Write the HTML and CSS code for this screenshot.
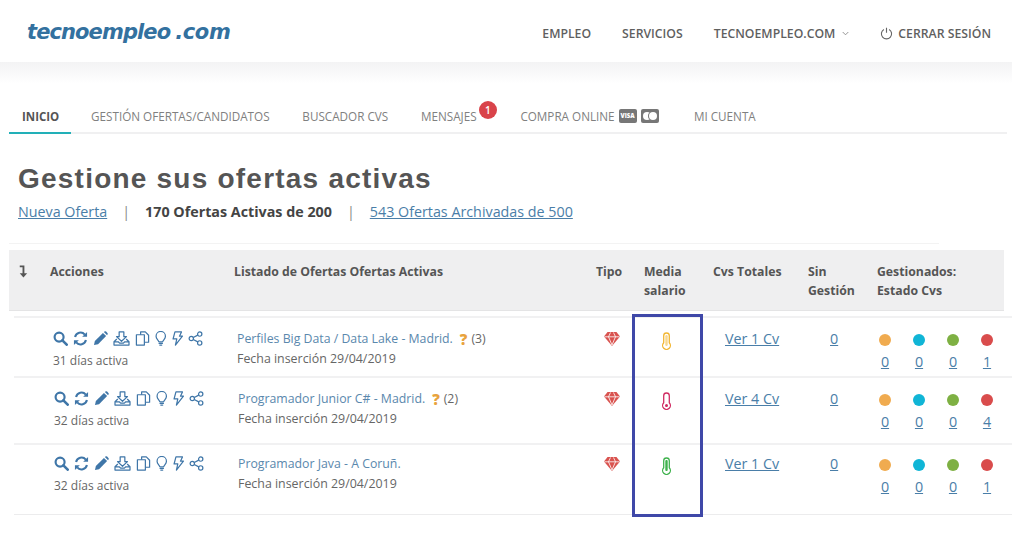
FILE: index.html
```html
<!DOCTYPE html>
<html lang="es">
<head>
<meta charset="utf-8">
<title>Gestione sus ofertas activas</title>
<link rel="stylesheet" href="styles.css">
</head>
<body>
<svg class="sprite" width="0" height="0" aria-hidden="true">
  <symbol id="i-search" viewBox="0 0 16 16"><circle cx="6.500" cy="6.500" r="4.800" fill="none" stroke="currentColor" stroke-width="2.300"/><path d="M10 10l4.600 4.600" stroke="currentColor" stroke-width="2.800" stroke-linecap="round"/></symbol>
  <symbol id="i-refresh" viewBox="0 0 16 16"><path d="M2.200 6.400A6 6 0 0 1 12.600 3.800" fill="none" stroke="currentColor" stroke-width="2.200"/><path d="M15 1v5.200H9.800z" fill="currentColor"/><path d="M13.800 9.600A6 6 0 0 1 3.400 12.200" fill="none" stroke="currentColor" stroke-width="2.200"/><path d="M1 15V9.800h5.200z" fill="currentColor"/></symbol>
  <symbol id="i-pencil" viewBox="0 0 16 16"><path d="M1 15l1-4.400L10.600 2l3.400 3.400L5.400 14z" fill="currentColor"/><path d="M11.600 1l.6-.4a1.400 1.400 0 0 1 1.800 0l1.400 1.400a1.400 1.400 0 0 1 0 1.800l-.4.6z" fill="currentColor"/></symbol>
  <symbol id="i-download" viewBox="0 0 18 16"><path d="M6.500 1h5v5h2.800L9 11 3.700 6h2.800z" fill="none" stroke="currentColor" stroke-width="1.300" stroke-linejoin="round"/><path d="M4 8.500L1 11.500V15h16v-3.500L14 8.500M1 11.500h4.500l1.500 1.500h4l1.500-1.500H17" fill="none" stroke="currentColor" stroke-width="1.300" stroke-linejoin="round"/></symbol>
  <symbol id="i-copy" viewBox="0 0 16 16"><path d="M6 4V1h5l3.500 3.500V12H10" fill="none" stroke="currentColor" stroke-width="1.300" stroke-linejoin="round"/><path d="M1.500 4H10v11H1.500z" fill="none" stroke="currentColor" stroke-width="1.300" stroke-linejoin="round"/></symbol>
  <symbol id="i-bulb" viewBox="0 0 12 16"><path d="M4 11.500C3.500 9.500 1 8.500 1 5.500a5 5 0 0 1 10 0c0 3-2.500 4-3 6z" fill="none" stroke="currentColor" stroke-width="1.300" stroke-linejoin="round"/><path d="M4.300 13.200h3.400M5 15h2" stroke="currentColor" stroke-width="1.400" stroke-linecap="round"/></symbol>
  <symbol id="i-bolt" viewBox="0 0 12 16"><path d="M3 1h7L7.800 5.500H11L3.500 15 5 8.500H1z" fill="none" stroke="currentColor" stroke-width="1.300" stroke-linejoin="round"/></symbol>
  <symbol id="i-share" viewBox="0 0 16 16"><circle cx="12.500" cy="3.300" r="2.300" fill="none" stroke="currentColor" stroke-width="1.300"/><circle cx="3.500" cy="8" r="2.300" fill="none" stroke="currentColor" stroke-width="1.300"/><circle cx="12.500" cy="12.700" r="2.300" fill="none" stroke="currentColor" stroke-width="1.300"/><path d="M5.600 7l4.800-2.600M5.600 9l4.800 2.600" stroke="currentColor" stroke-width="1.300"/></symbol>
  <symbol id="i-gem" viewBox="0 0 16 14"><path d="M3.500 0h9L16 4.500 8 14 0 4.500z" fill="currentColor"/><path d="M.5 4.800h15M4.500 4.800L8 13 11.500 4.800M4.500 4.800L6.500.5M11.500 4.800L9.500.5" fill="none" stroke="#fff" stroke-width=".8"/></symbol>
  <symbol id="i-thermo" viewBox="0 0 10 18"><path d="M2.200 10.800V3.800a2.800 2.800 0 0 1 5.600 0v7a3.900 3.900 0 1 1-5.600 0z" fill="none" stroke="currentColor" stroke-width="1.300"/></symbol>
</svg>

<header class="topbar">
  <a class="logo">tecnoempleo<span class="logo-dot">.com</span></a>
  <nav class="mainnav">
    <a>EMPLEO</a>
    <a>SERVICIOS</a>
    <a class="with-chevron">TECNOEMPLEO.COM
      <svg class="chevron" viewBox="0 0 8 5" width="7" height="5"><path d="M.8.800L4 4l3.200-3.200" fill="none" stroke="#888" stroke-width="1"/></svg>
    </a>
    <a class="logout">
      <svg viewBox="0 0 14 14" width="13" height="13"><path d="M4.200 2.600a5.500 5.500 0 1 0 5.600 0" fill="none" stroke="#666" stroke-width="1.200"/><path d="M7 .8v5.400" stroke="#666" stroke-width="1.200"/></svg>
      CERRAR SESIÓN
    </a>
  </nav>
</header>
<div class="band"></div>

<nav class="tabs">
  <a class="tab active">INICIO</a>
  <a class="tab">GESTIÓN OFERTAS/CANDIDATOS</a>
  <a class="tab">BUSCADOR CVS</a>
  <a class="tab tab-msg">MENSAJES<span class="badge">1</span></a>
  <a class="tab tab-buy">COMPRA ONLINE
    <span class="card card-visa">VISA</span>
    <span class="card card-mc"><i></i><i></i></span>
  </a>
  <a class="tab">MI CUENTA</a>
</nav>

<main class="content">
  <h1 class="title">Gestione sus ofertas activas</h1>
  <p class="summary">
    <a class="link">Nueva Oferta</a><span class="sep">|</span><strong>170 Ofertas Activas de 200</strong><span class="sep">|</span><a class="link">543 Ofertas Archivadas de 500</a>
  </p>
  <div class="rule"></div>

  <section class="table">
    <div class="thead">
      <div class="sort"><svg viewBox="0 0 10 14" width="10" height="13"><path d="M1.500 1.500h4v8.500" fill="none" stroke="#555" stroke-width="2"/><path d="M1.500 9h8L5.500 13.500z" fill="#555"/></svg></div>
      <div>Acciones</div>
      <div>Listado de Ofertas Ofertas Activas</div>
      <div>Tipo</div>
      <div>Media<br>salario</div>
      <div>Cvs Totales</div>
      <div>Sin<br>Gestión</div>
      <div>Gestionados:<br>Estado Cvs</div>
    </div>

    <article class="row row-1">
      <div class="actions">
        <div class="icons">
          <svg class="ic"><use href="#i-search"/></svg><svg class="ic"><use href="#i-refresh"/></svg><svg class="ic"><use href="#i-pencil"/></svg><svg class="ic ic-w"><use href="#i-download"/></svg><svg class="ic"><use href="#i-copy"/></svg><svg class="ic ic-n"><use href="#i-bulb"/></svg><svg class="ic ic-n"><use href="#i-bolt"/></svg><svg class="ic"><use href="#i-share"/></svg>
        </div>
        <div class="muted">31 días activa</div>
      </div>
      <div class="offer">
        <div class="offer-name"><a>Perfiles Big Data / Data Lake - Madrid.</a> <b class="q">?</b><span class="muted">(3)</span></div>
        <div class="muted date">Fecha inserción 29/04/2019</div>
      </div>
      <svg class="gem"><use href="#i-gem"/></svg>
      <svg class="thermo t-yellow" viewBox="0 0 10 18"><use href="#i-thermo"/><rect x="3.800" y="3" width="2.400" height="11" rx="1.200" fill="currentColor" opacity=".55"/></svg>
      <a class="link cv">Ver 1 Cv</a>
      <a class="link sin">0</a>
      <div class="states">
        <div><i class="dot d-o"></i><a class="link">0</a></div><div><i class="dot d-b"></i><a class="link">0</a></div><div><i class="dot d-g"></i><a class="link">0</a></div><div><i class="dot d-r"></i><a class="link">1</a></div>
      </div>
    </article>

    <article class="row row-2">
      <div class="actions">
        <div class="icons">
          <svg class="ic"><use href="#i-search"/></svg><svg class="ic"><use href="#i-refresh"/></svg><svg class="ic"><use href="#i-pencil"/></svg><svg class="ic ic-w"><use href="#i-download"/></svg><svg class="ic"><use href="#i-copy"/></svg><svg class="ic ic-n"><use href="#i-bulb"/></svg><svg class="ic ic-n"><use href="#i-bolt"/></svg><svg class="ic"><use href="#i-share"/></svg>
        </div>
        <div class="muted">32 días activa</div>
      </div>
      <div class="offer">
        <div class="offer-name"><a>Programador Junior C# - Madrid.</a> <b class="q">?</b><span class="muted">(2)</span></div>
        <div class="muted date">Fecha inserción 29/04/2019</div>
      </div>
      <svg class="gem"><use href="#i-gem"/></svg>
      <svg class="thermo t-red" viewBox="0 0 10 18"><use href="#i-thermo"/><circle cx="5" cy="13.500" r="1.500" fill="currentColor"/></svg>
      <a class="link cv">Ver 4 Cv</a>
      <a class="link sin">0</a>
      <div class="states">
        <div><i class="dot d-o"></i><a class="link">0</a></div><div><i class="dot d-b"></i><a class="link">0</a></div><div><i class="dot d-g"></i><a class="link">0</a></div><div><i class="dot d-r"></i><a class="link">4</a></div>
      </div>
    </article>

    <article class="row row-3">
      <div class="actions">
        <div class="icons">
          <svg class="ic"><use href="#i-search"/></svg><svg class="ic"><use href="#i-refresh"/></svg><svg class="ic"><use href="#i-pencil"/></svg><svg class="ic ic-w"><use href="#i-download"/></svg><svg class="ic"><use href="#i-copy"/></svg><svg class="ic ic-n"><use href="#i-bulb"/></svg><svg class="ic ic-n"><use href="#i-bolt"/></svg><svg class="ic"><use href="#i-share"/></svg>
        </div>
        <div class="muted">32 días activa</div>
      </div>
      <div class="offer">
        <div class="offer-name"><a>Programador Java - A Coruñ.</a></div>
        <div class="muted date">Fecha inserción 29/04/2019</div>
      </div>
      <svg class="gem"><use href="#i-gem"/></svg>
      <svg class="thermo t-green" viewBox="0 0 10 18"><use href="#i-thermo"/><rect x="3.800" y="3" width="2.400" height="11" rx="1" fill="currentColor"/></svg>
      <a class="link cv">Ver 1 Cv</a>
      <a class="link sin">0</a>
      <div class="states">
        <div><i class="dot d-o"></i><a class="link">0</a></div><div><i class="dot d-b"></i><a class="link">0</a></div><div><i class="dot d-g"></i><a class="link">0</a></div><div><i class="dot d-r"></i><a class="link">1</a></div>
      </div>
    </article>

    <div class="highlight"></div>
  </section>
</main>
</body>
</html>
```

FILE: styles.css
```css
* { box-sizing: border-box; }
html, body { margin: 0; padding: 0; background: #fff; overflow: hidden; }
body { width: 1024px; height: 539px; font-family: "Open Sans", sans-serif; color: #555; }
.sprite { position: absolute; }

.topbar { height: 62px; display: flex; align-items: center; justify-content: space-between; padding: 2px 33px 0 27px; }
.logo { font-family: "DejaVu Sans", sans-serif; font-weight: 700; font-style: italic; font-size: 21px; letter-spacing: -0.900px; color: #33719f; }
.logo-dot { letter-spacing: -0.400px; margin-left: 5px; }
.mainnav { display: flex; align-items: center; gap: 31px; font-size: 12.250px; font-weight: 600; color: #5f5f5f; padding-top: 3px; }
.with-chevron { display: flex; align-items: center; gap: 7px; }
.chevron { display: block; }
.logout { display: flex; align-items: center; gap: 5px; }

.band { width: 1012px; height: 22px; background: linear-gradient(#f3f3f4, #fff); }

.tabs { width: 998px; margin: 10px 0 0 9px; height: 40px; display: flex; gap: 6.800px; border-bottom: 2px solid #f0f0f1; font-size: 11.700px; color: #808080; }
.tab { height: 40px; padding: 4px 13px 0; display: flex; align-items: center; gap: 4px; position: relative; }
.tab.active { color: #555; font-weight: 700; font-size: 11.500px; padding-top: 6px; padding-right: 12px; border-bottom: 2px solid #22b0b8; }
.tab-msg { padding-right: 37px; }
.tab-buy { padding-left: 0; padding-right: 15.500px; }
.badge { position: absolute; left: 71px; top: 7px; width: 18px; height: 18px; border-radius: 50%; background: #d9434a; color: #fff; font-size: 10px; font-weight: 600; display: flex; align-items: center; justify-content: center; }
.card { width: 18px; height: 14px; border-radius: 2px; background: #777; color: #fff; font-size: 6px; font-weight: 800; display: inline-flex; align-items: center; justify-content: center; }
.card-mc i { width: 8px; height: 8px; border-radius: 50%; background: #fff; display: block; }
.card-mc i + i { margin-left: -2px; box-shadow: -1px 0 0 #777; }

.content { padding-left: 9px; }
.title { margin: 27px 0 0 9px; font-family: "Liberation Sans", sans-serif; font-weight: 700; font-size: 28px; line-height: 36px; letter-spacing: 1.220px; color: #555; }
.summary { margin: 4px 0 0 9px; font-size: 14.300px; line-height: 22px; color: #444; display: flex; }
.summary strong { font-weight: 700; font-size: 14.300px; }
.sep { color: #888; margin: 0 15px; }
.link { color: #4a7ea8; text-decoration: underline; }
.rule { width: 930px; height: 1px; margin-top: 20px; background: #f3f3f3; }

.table { position: relative; margin-top: 6px; font-size: 12px; }
.thead { width: 995px; height: 61px; background: #efeff0; border-bottom: 1px solid #e4e4e5; padding-top: 12px; display: grid; grid-template-columns: 41px 184px 362px 48px 69px 95px 69px 1fr; font-weight: 700; font-size: 12.250px; line-height: 19px; color: #555; }
.sort { padding-left: 9px; }
.sort svg { display: block; margin-top: 3px; }

.row { display: grid; width: 998px; margin-left: 5px; grid-template-columns: 39px 184px 364px 53px 71px 105px 43px 1fr; align-items: start; border-top: 2px solid #f1f1f2; }
.row > .actions { grid-column: 2; }
.row-1 { height: 60px; margin-top: 5px; padding-top: 11px; }
.row-2 { height: 67px; padding-top: 11px; }
.row-3 { height: 72px; padding-top: 9px; border-bottom: 1px solid #ececed; }
.row-2 .actions, .row-2 .offer, .row-3 .actions, .row-3 .offer { padding-left: 1px; }

.icons { display: flex; align-items: center; gap: 5px; color: #3f76a8; height: 18px; }
.ic { width: 15px; height: 15px; display: block; flex: none; }
.ic-w { width: 17px; }
.ic-n { width: 11.500px; }
.muted { color: #666; font-size: 12px; line-height: 17px; }
.actions .muted { margin-top: 5px; }
.offer { padding-top: 1px; }
.offer-name { font-size: 12.300px; line-height: 17px; display: flex; gap: 4px; align-items: center; }
.offer .date { margin-top: 3px; font-size: 12.400px; }
.offer-name a { color: #5a88ad; }
.q { color: #e8a33d; font-size: 15px; font-weight: 800; line-height: 14px; margin-left: 3px; }
.offer-name .muted { margin: 0; font-size: 12.300px; }

.gem { width: 16px; height: 14px; color: #d9534f; margin-top: 3px; margin-left: 3px; }
.thermo { width: 11px; height: 18px; margin: 3px 0 0 7px; }
.t-yellow { color: #f2b632; }
.t-red { color: #d02b62; }
.t-green { color: #3fb24d; }
.cv { font-size: 14.300px; line-height: 20px; }
.sin { font-size: 14.300px; line-height: 20px; }
.states { display: flex; margin-left: -5px; }
.states > div { width: 34px; display: flex; flex-direction: column; align-items: center; font-size: 14.300px; line-height: 20px; }
.dot { display: block; width: 12px; height: 12px; border-radius: 50%; margin: 5px 0 6px; }
.d-o { background: #f0ab4f; }
.d-b { background: #10b5d6; }
.d-g { background: #7eb043; }
.d-r { background: #d94c4c; }

.highlight { position: absolute; left: 623px; top: 64px; width: 71px; height: 203px; border: 3px solid #3f48a8; }
```
